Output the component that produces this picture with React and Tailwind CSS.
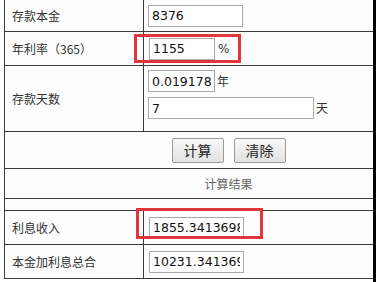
import React from "react";

const cjk = { fontFamily: '"Noto Sans CJK SC", "Liberation Sans", sans-serif' };

function Field({ value, w }) {
  return (
    <input
      readOnly
      value={value}
      className={`h-[22px] border border-[#a9a9a9] bg-white px-[3px] text-[12.5px] text-[#111] outline-none ${w}`}
      style={{ fontFamily: '"DejaVu Sans", sans-serif' }}
    />
  );
}

function Label({ children }) {
  return (
    <div className="flex h-full w-[139px] shrink-0 items-center border-r border-[#3a3a3a] pl-[7px] text-[12px] text-[#333]">
      {children}
    </div>
  );
}

export default function App() {
  return (
    <div className="relative flex h-[282px] w-[376px] overflow-hidden bg-white" style={cjk}>
      <div className="w-[373px] overflow-hidden">
        <div className="ml-[4px] w-[448px] border-l border-[#3a3a3a] bg-[#fdfdfd]">
          {/* 存款本金 */}
          <div className="flex h-[32px] border-b border-[#3a3a3a]">
            <Label>存款本金</Label>
            <div className="flex items-center pl-[4px]">
              <Field value="8376" w="w-[95px]" />
            </div>
          </div>

          {/* 年利率 */}
          <div className="flex h-[34px] border-b border-[#3a3a3a]">
            <Label>年利率（365）</Label>
            <div className="flex items-center gap-[3px] pl-[5px] text-[12px] text-[#333]">
              <Field value="1155" w="w-[66px]" />
              <span style={{ fontFamily: '"DejaVu Sans", sans-serif' }}>%</span>
            </div>
          </div>

          {/* 存款天数 */}
          <div className="flex h-[66px] border-b border-[#3a3a3a]">
            <Label>存款天数</Label>
            <div className="flex flex-col gap-[5px] pl-[4px] pt-[4px] text-[12px] text-[#333]">
              <div className="flex items-center gap-[2px]">
                <Field value="0.019178" w="w-[67px]" />
                <span>年</span>
              </div>
              <div className="flex items-center gap-[2px]">
                <Field value="7" w="w-[166px]" />
                <span>天</span>
              </div>
            </div>
          </div>

          {/* buttons */}
          <div className="flex h-[37px] items-center justify-center gap-[10px] border-b border-[#3a3a3a] pt-[1px]">
            <button className="h-[25px] w-[52px] rounded-[2px] border border-[#9a9a9a] bg-gradient-to-b from-[#f7f7f7] to-[#e2e2e2] text-[14px] text-[#222]">
              计算
            </button>
            <button className="h-[25px] w-[52px] rounded-[2px] border border-[#9a9a9a] bg-gradient-to-b from-[#f7f7f7] to-[#e2e2e2] text-[14px] text-[#222]">
              清除
            </button>
          </div>

          {/* 计算结果 */}
          <div className="flex h-[30px] items-center justify-center border-b border-[#3a3a3a] text-[12px] text-[#666]">
            计算结果
          </div>

          <div className="h-[12px] border-b border-[#3a3a3a]" />

          {/* 利息收入 */}
          <div className="flex h-[34px] border-b border-[#3a3a3a]">
            <Label>利息收入</Label>
            <div className="flex items-center pl-[5px]">
              <Field value="1855.3413698" w="w-[95px]" />
            </div>
          </div>

          {/* 本金加利息总合 */}
          <div className="flex h-[34px] border-b border-[#3a3a3a]">
            <Label>本金加利息总合</Label>
            <div className="flex items-center pl-[5px]">
              <Field value="10231.341369" w="w-[95px]" />
            </div>
          </div>
        </div>
      </div>
      <div className="w-[3px] bg-black" />

      {/* highlight boxes */}
      <div className="absolute left-[134px] top-[34px] h-[29px] w-[107px] border-[3px] border-[#e0363c]" />
      <div className="absolute left-[136px] top-[208px] h-[31px] w-[127px] border-[3px] border-[#e0363c]" />
    </div>
  );
}
